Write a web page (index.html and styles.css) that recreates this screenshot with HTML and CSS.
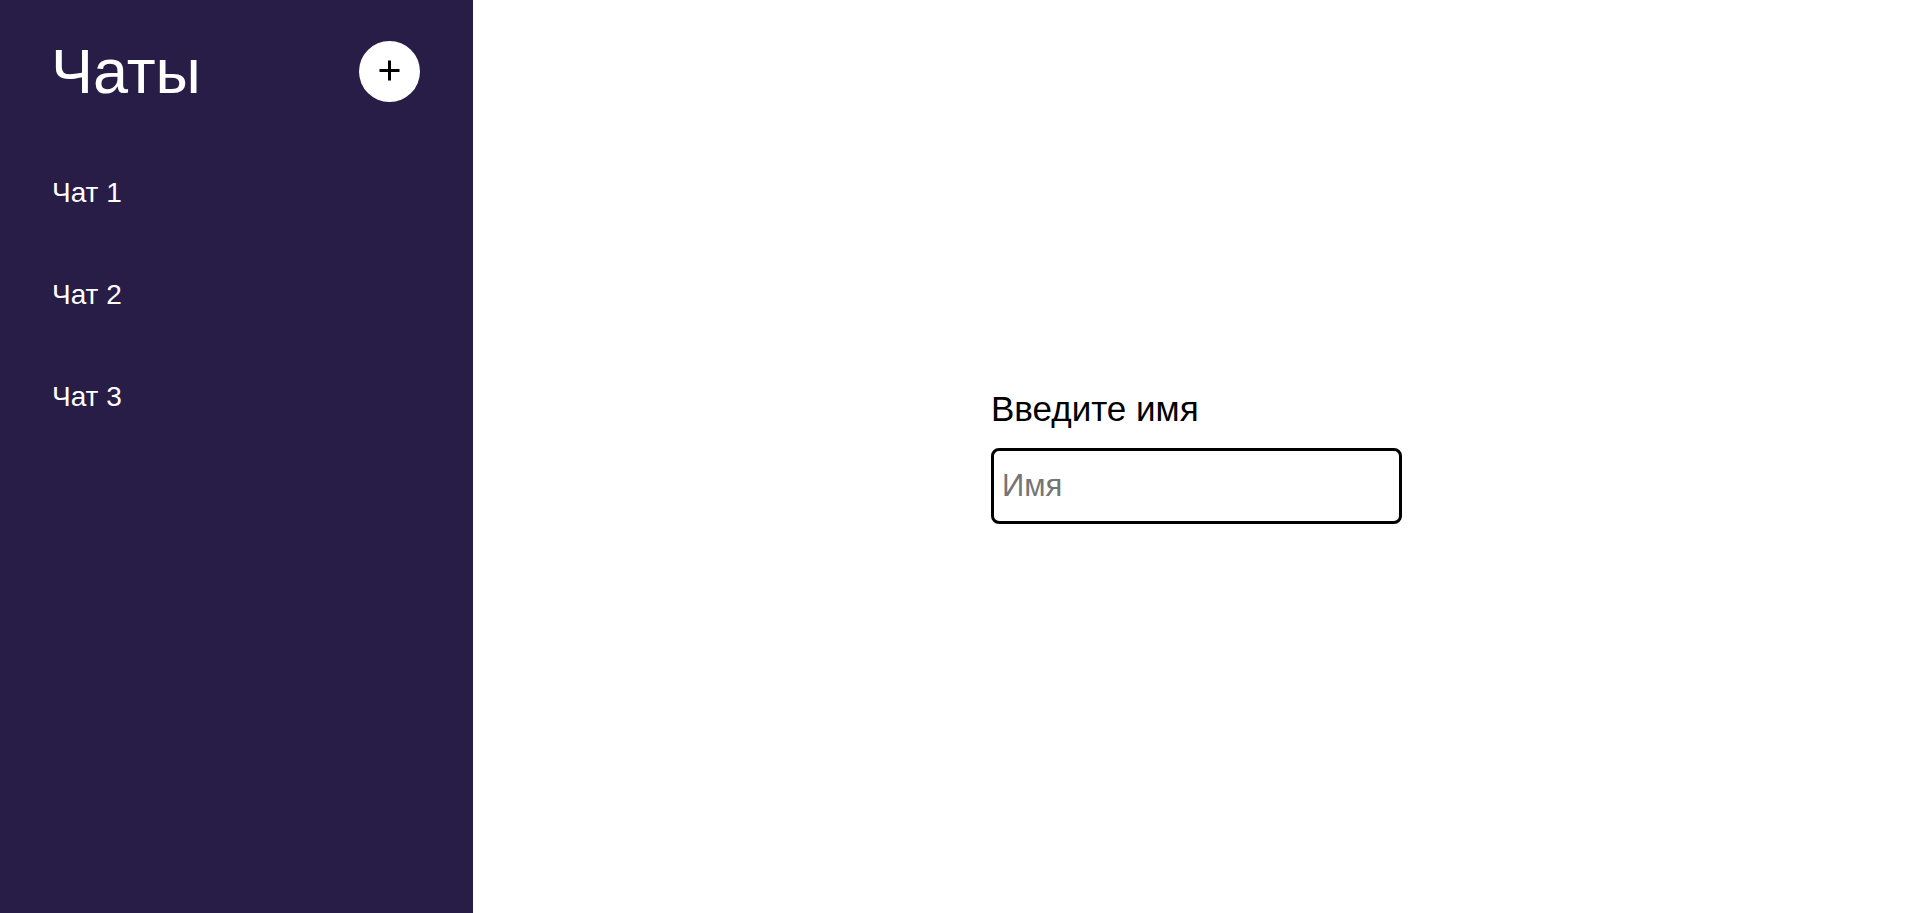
FILE: index.html
```html
<!DOCTYPE html>
<html lang="ru">
<head>
<meta charset="utf-8">
<title>Чаты</title>
<link rel="stylesheet" href="styles.css">
</head>
<body>
<div class="app">
  <aside class="sidebar">
    <div class="sidebar-header">
      <h1 class="sidebar-title">Чаты</h1>
      <button class="add-btn" type="button" aria-label="Добавить чат">
        <svg class="add-icon" width="21" height="21" viewBox="0 0 21 21" aria-hidden="true">
          <path d="M10.5 0.5V20.5M0.5 10.5H20.5" stroke="#000" stroke-width="3" fill="none"/>
        </svg>
      </button>
    </div>
    <ul class="chat-list">
      <li class="chat-item">Чат 1</li>
      <li class="chat-item">Чат 2</li>
      <li class="chat-item">Чат 3</li>
    </ul>
  </aside>
  <main class="main">
    <form class="name-form">
      <label class="name-label" for="name">Введите имя</label>
      <input class="name-input" id="name" type="text" placeholder="Имя">
    </form>
  </main>
</div>
</body>
</html>
```
FILE: styles.css
```css
* { box-sizing: border-box; }
html, body { margin: 0; padding: 0; height: 100%; }
body {
  font-family: "Liberation Sans", Arial, sans-serif;
  background: #ffffff;
  color: #000;
}
.app {
  display: flex;
  height: 100vh;
}
.sidebar {
  width: 473px;
  flex: 0 0 473px;
  background: #271d47;
  color: #ffffff;
  padding: 40px 53px 0 51px;
}
.sidebar-header {
  display: flex;
  align-items: center;
  justify-content: space-between;
  height: 62px;
}
.sidebar-title {
  margin: 0;
  font-size: 63px;
  font-weight: 400;
  line-height: 1;
}
.add-btn {
  width: 61px;
  height: 61px;
  border-radius: 50%;
  border: none;
  background: #ffffff;
  padding: 0;
  display: flex;
  align-items: center;
  justify-content: center;
}
.add-icon {
  display: block;
  margin-top: -1px;
}
.chat-list {
  list-style: none;
  margin: 75px 0 0 0;
  padding: 0 0 0 1px;
  display: flex;
  flex-direction: column;
  gap: 70px;
}
.chat-item {
  font-size: 28px;
  line-height: 32px;
}
.main {
  flex: 1;
  display: flex;
  align-items: center;
  justify-content: center;
}
.name-form {
  display: flex;
  flex-direction: column;
  align-items: flex-start;
  gap: 19px;
}
.name-label {
  font-size: 35px;
}
.name-input {
  width: 411px;
  height: 76px;
  border: 3px solid #000;
  border-radius: 8px;
  padding: 0 8px;
  font-family: "Liberation Sans", Arial, sans-serif;
  font-size: 31px;
  color: #000;
  outline: none;
}
.name-input::placeholder {
  color: #757575;
}
```
